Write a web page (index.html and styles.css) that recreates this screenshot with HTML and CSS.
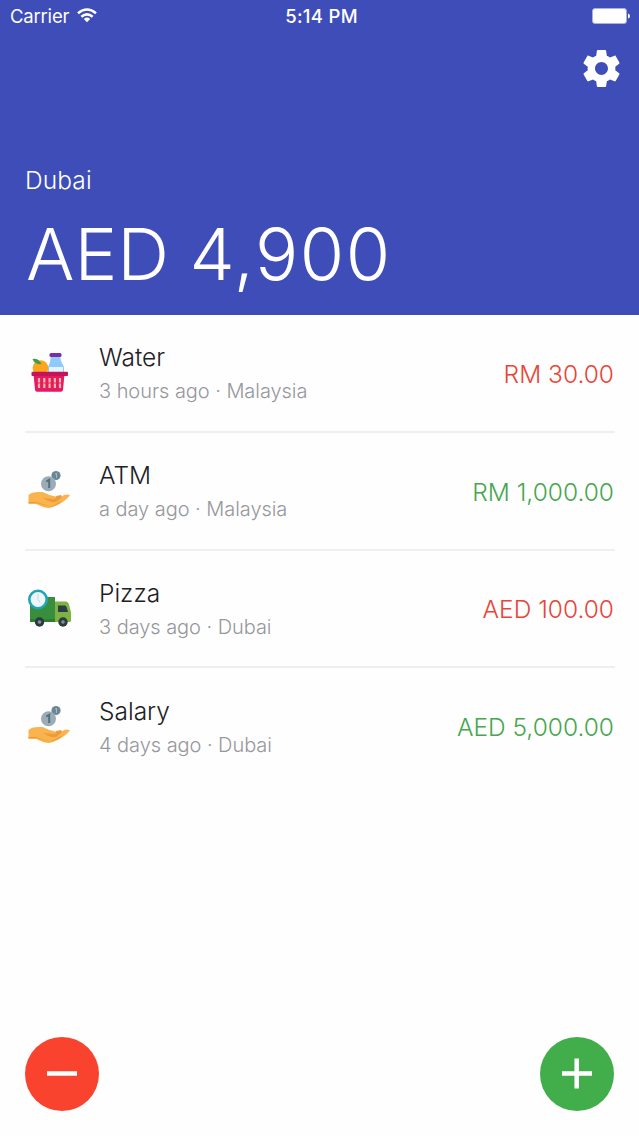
FILE: index.html
```html
<!DOCTYPE html>
<html lang="en">
<head>
<meta charset="utf-8">
<title>Wallet</title>
<link rel="stylesheet" href="styles.css">
</head>
<body>
<svg class="defs" aria-hidden="true">
  <symbol id="hand" viewBox="0 0 60 60">
    <path fill="#f9b450" d="M8.500 35q3-3 10-3h4l7 3 6 1.500q3 1 2 3l6.500-4.500q4.500-1 6 .5-4 5-10.500 8.500l-6.500 3q-6 2-11-.5l-6-2.500H8.500z"/>
    <path fill="#ef9c38" d="M23 38l11 1q3-1 2-3l5-1q2 2-1 4l-4 3q-6 1-13-4zM8.500 42h7.500l8 2.500q5 2.500 10 .5l9-5q-4 5-10 6-6 1-11-1.500l-6-1.500H8.500z"/>
    <circle fill="#6b8796" cx="36" cy="15.500" r="4.600"/>
    <circle fill="#9bacb6" cx="28.500" cy="23.700" r="7.500"/>
    <path fill="none" stroke="#52707e" stroke-width="2" d="M26.300 21.500l2.900-1.800v8.300"/>
    <path fill="none" stroke="#a9bac3" stroke-width="1" d="M35 14.300l1.500-1v4.500"/>
  </symbol>
</svg>
<header class="header">
  <div class="status">
    <div class="carrier"><span>Carrier</span>
      <svg class="wifi" viewBox="0 0 20 15"><path fill="none" stroke="#fff" stroke-width="2.500" d="M1 5.200Q10-2.300 19 5.200M4.300 8.700Q10 4 15.700 8.700"/><path fill="#fff" d="M6.800 11Q10 8.200 13.200 11L10 14.300z"/></svg>
    </div>
    <div class="time">5:14 PM</div>
    <svg class="battery" viewBox="0 0 38 16"><rect x=".5" y=".5" width="34" height="15" rx="2.500" fill="#fff" stroke="#a9aeea"/><path fill="#fff" d="M36 5.500q2 .5 2 2.500t-2 2.500z"/></svg>
  </div>
  <svg class="gear" viewBox="2 2 20 20"><path fill="#fff" d="M19.430 12.980c.04-.32.07-.64.07-.98s-.03-.66-.07-.98l2.110-1.650c.19-.15.24-.42.12-.64l-2-3.460c-.12-.22-.39-.3-.61-.22l-2.490 1c-.52-.4-1.080-.73-1.690-.98l-.38-2.650C14.460 2.180 14.250 2 14 2h-4c-.25 0-.46.18-.49.42l-.38 2.650c-.61.25-1.170.59-1.690.98l-2.490-1c-.23-.09-.49 0-.61.22l-2 3.460c-.13.22-.07.49.12.64l2.110 1.650c-.04.32-.07.65-.07.98s.03.66.07.98l-2.110 1.650c-.19.15-.24.42-.12.64l2 3.460c.12.22.39.3.61.22l2.490-1c.52.4 1.080.73 1.690.98l.38 2.650c.03.24.24.42.49.42h4c.25 0 .46-.18.49-.42l.38-2.650c.61-.25 1.170-.59 1.690-.98l2.490 1c.23.09.49 0 .61-.22l2-3.460c.12-.22.07-.49-.12-.64l-2.110-1.650zM12 15.500c-1.930 0-3.500-1.570-3.500-3.500s1.570-3.500 3.500-3.500 3.500 1.570 3.500 3.500-1.570 3.500-3.500 3.500z"/></svg>
  <div class="wallet">Dubai</div>
  <div class="balance">AED <span class="figure">4,900</span></div>
</header>
<main class="list">
  <article class="row">
    <svg class="icon" viewBox="0 3 60 60">
      <path fill="#90cafa" d="M31 16h9l1 5 3 6v6H28v-6l2-5z"/><path fill="#e4f4fd" d="M29 27h14v6H29z"/>
      <rect x="29.500" y="13" width="12" height="4" rx="1.500" fill="#7b2cab"/>
      <circle cx="20.500" cy="28" r="7.800" fill="#fba61c"/><path fill="#419e48" d="M12.500 19q6-1 9 5-7 1-9-5z"/>
      <path fill="#e41b62" d="M13.500 34h31l-1.500 15.700q-.2 2-2 2H17q-1.800 0-2-2z"/><rect x="11.500" y="31.700" width="36.500" height="4.300" rx="1" fill="#c71459"/>
      <path stroke="#ffb7a0" stroke-width="2.200" stroke-dasharray="4.500 1" d="M19 38v10.500M24.300 38v10.500M29.600 38v10.500M34.900 38v10.500M40 38v10.500"/>
    </svg>
    <div class="info"><div class="title">Water</div><div class="sub">3 hours ago · Malaysia</div></div>
    <div class="amount out">RM 30.00</div>
  </article>
  <article class="row">
    <svg class="icon coins"><use href="#hand"/></svg>
    <div class="info"><div class="title">ATM</div><div class="sub">a day ago · Malaysia</div></div>
    <div class="amount in">RM 1,000.00</div>
  </article>
  <article class="row">
    <svg class="icon" viewBox="0 -1.500 60 60">
      <path fill="#388e3c" d="M10 17.500h25v22H10z"/><path fill="#2e7d32" d="M10 39.500h26v3H10z"/>
      <path fill="#7cb342" d="M35 22h11q2 0 3 3l2 8v8q0 1.500-1.500 1.500H35z"/>
      <path fill="#2b3d46" d="M38 26h7q1 0 1.500 1.500L48 32.500H38z"/>
      <g fill="#2b3940"><circle cx="19.500" cy="42.500" r="4.700"/><circle cx="43" cy="42.500" r="4.700"/></g>
      <g fill="#81949d"><circle cx="19.500" cy="42.500" r="1.800"/><circle cx="43" cy="42.500" r="1.800"/></g>
      <circle cx="18" cy="20" r="8.700" fill="#edf7fa" stroke="#20a5b8" stroke-width="2.600"/>
      <path stroke="#c3cfd4" d="M18 14v6l2 3" fill="none" stroke-width=".8"/>
    </svg>
    <div class="info"><div class="title">Pizza</div><div class="sub">3 days ago · Dubai</div></div>
    <div class="amount out">AED 100.00</div>
  </article>
  <article class="row">
    <svg class="icon coins"><use href="#hand"/></svg>
    <div class="info"><div class="title">Salary</div><div class="sub">4 days ago · Dubai</div></div>
    <div class="amount in">AED 5,000.00</div>
  </article>
</main>
<footer class="actions">
  <div class="fab minus"><svg viewBox="0 0 74 74"><path d="M22 36.500h30"/></svg></div>
  <div class="fab plus"><svg viewBox="0 0 74 74"><path d="M22 36.500h30M36.700 21.500v30"/></svg></div>
</footer>
</body>
</html>
```
FILE: styles.css
```css
* { box-sizing: border-box; }
body {
  margin: 0;
  height: 1136px;
  display: flex;
  flex-direction: column;
  background: #fefefe;
  color: #212124;
  font-family: Inter, "Liberation Sans", sans-serif;
  font-weight: 300;
  white-space: nowrap;
  overflow: hidden;
}
svg { display: block; }
.defs { display: none; }
.header {
  height: 315px;
  flex: none;
  display: flex;
  flex-direction: column;
  background: #3f4db8;
  color: #fff;
}
.status {
  height: 32px;
  display: grid;
  grid-template-columns: 1fr auto 1fr;
  align-items: center;
  padding: 0 9px 0 10px;
  font-size: 18.500px;
}
.carrier { display: flex; align-items: center; gap: 8px; font-weight: 400; letter-spacing: -.2px; }
.wifi { width: 20px; height: 15px; margin-top: -2px; }
.time { font-weight: 500; padding-left: 3px; letter-spacing: .3px; }
.battery { width: 38px; height: 16px; justify-self: end; }
.gear { width: 37px; height: 37px; margin: 17.500px 19px .5px auto; }
.wallet {
  margin: 76px 0 0 25px;
  font-size: 24.500px;
  line-height: 34px;
  letter-spacing: .1px;
}
.balance {
  margin: 12px 0 0 26px;
  font-size: 72px;
  line-height: 90px;
  font-weight: 300;
}
.figure { letter-spacing: 1.500px; }
.list { padding: 0 24px 0 25px; }
.row {
  height: 117.800px;
  display: flex;
  align-items: center;
  border-bottom: 2px solid #efeff2;
}
.row:last-child { border-bottom-color: transparent; }
.icon { width: 60px; height: 60px; margin-left: -5px; flex: none; }
.coins { margin-bottom: 2px; }
.info { margin-left: 19px; flex: 1; padding-top: 4px; }
.title { font-size: 24.500px; line-height: 34px; }
.sub { font-size: 20px; line-height: 35px; color: #97979c; letter-spacing: -.05px; }
.amount { font-size: 24.500px; padding: 2px 1px 0 0; }
.out { color: #e84538; }
.in { color: #47a64e; }
.actions {
  margin: auto 25px 25px;
  display: flex;
  justify-content: space-between;
}
.fab { width: 74px; height: 74px; border-radius: 50%; }
.minus { background: #f9432e; }
.plus { background: #41ae4b; }
.fab path { stroke: #fff; stroke-width: 4.500; }
```
